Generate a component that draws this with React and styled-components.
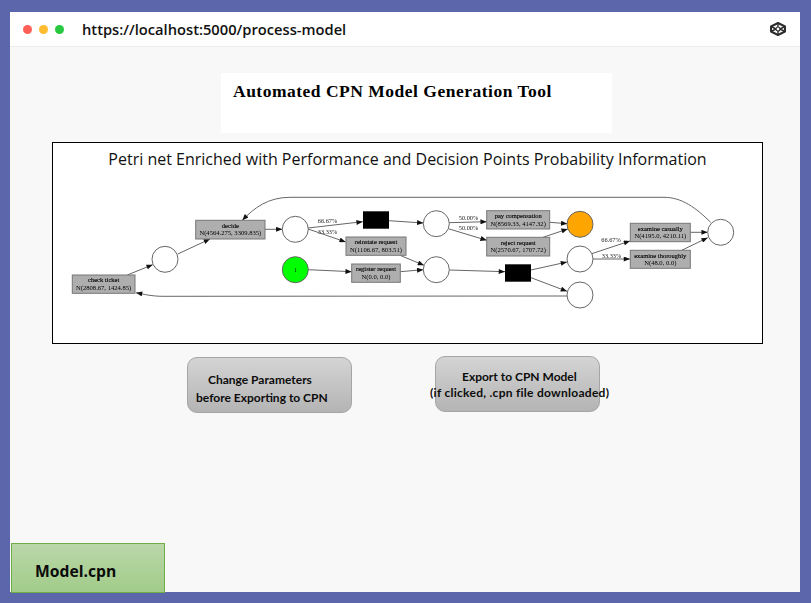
import styled, { createGlobalStyle } from 'styled-components';

const GlobalStyle = createGlobalStyle`
  html, body {
    margin: 0;
    padding: 0;
    background: #5b66ab;
  }
`;

const Page = styled.div`
  width: 811px;
  height: 603px;
  padding: 12px 11px 11px 10px;
  box-sizing: border-box;
  overflow: hidden;
`;

const Window = styled.div`
  height: 100%;
  display: flex;
  flex-direction: column;
  background: #f8f8f9;
  border-radius: 4px 4px 0 0;
`;

const TitleBar = styled.div`
  display: flex;
  align-items: center;
  height: 34px;
  padding: 0 14px 0 13px;
  background: #ffffff;
  border-bottom: 1px solid #ececee;
  flex-shrink: 0;
`;

const Dot = styled.span`
  width: 9px;
  height: 9px;
  border-radius: 50%;
  margin-right: 7px;
  background: ${(p) => p.$color};
`;

const Url = styled.div`
  margin-left: 11px;
  flex: 1;
  font-family: "Open Sans", sans-serif;
  font-weight: 600;
  font-size: 14.7px;
  color: #111;
`;

const Content = styled.div`
  flex: 1;
  display: flex;
  flex-direction: column;
  padding-top: 26px;
`;

const HeadingCard = styled.div`
  width: 391px;
  height: 60px;
  margin-left: 211px;
  padding: 8px 12px;
  box-sizing: border-box;
  background: #fff;
`;

const Heading = styled.h1`
  margin: 0;
  font-family: "Liberation Serif", serif;
  font-weight: bold;
  font-size: 17.5px;
  letter-spacing: 0.5px;
  line-height: 20px;
  color: #000;
`;

const DiagramBox = styled.div`
  width: 711px;
  height: 202px;
  margin: 9px 0 0 42px;
  box-sizing: border-box;
  border: 1px solid #000;
  background: #fff;
`;

const DiagramTitle = styled.div`
  height: 32px;
  padding-top: 6px;
  box-sizing: border-box;
  text-align: center;
  font-family: "Open Sans", sans-serif;
  font-size: 16px;
  line-height: 21px;
  color: #111;
`;

const NetDrawing = styled.svg`
  display: block;
  filter: blur(0.35px);
`;

const Actions = styled.div`
  display: flex;
  align-items: flex-start;
  gap: 83px;
  margin: 12px 0 0 177px;
`;

const ActionButton = styled.div`
  width: 165px;
  height: 56px;
  margin-top: ${(p) => p.$top}px;
  padding-top: ${(p) => p.$pad}px;
  box-sizing: border-box;
  display: flex;
  flex-direction: column;
  justify-content: center;
  background: linear-gradient(#d4d4d4, #b4b4b4);
  border: 1px solid #a5a5a5;
  border-radius: 10px;
  font-family: "Lato", sans-serif;
  font-weight: bold;
  font-size: 12px;
  line-height: ${(p) => p.$leading}px;
  color: #0c0c0c;
  white-space: nowrap;
`;

const ButtonLine = styled.span`
  margin-left: ${(p) => p.$indent}px;
  letter-spacing: ${(p) => p.$tracking || 0}px;
`;

const ModelFile = styled.div`
  margin: auto 0 -1px 1px;
  width: 154px;
  height: 50px;
  box-sizing: border-box;
  display: flex;
  align-items: center;
  padding: 5px 0 0 23px;
  background: linear-gradient(#bad7a9, #a2cc89);
  border: 1px solid #70ad47;
  font-family: "Open Sans", sans-serif;
  font-weight: 700;
  font-size: 15.7px;
  color: #0b0b0b;
`;

const places = [
  [165, 259.3, '#fff'],
  [295.3, 229.3, '#fff'],
  [295.3, 269.7, '#00ff00'],
  [436.3, 223.7, '#fff'],
  [436.3, 269.7, '#fff'],
  [580, 224.3, '#ffa500'],
  [580, 259, '#fff'],
  [580, 295, '#fff'],
  [720.7, 232.3, '#fff'],
];

const transitions = [
  [72.3, 275, 62.7, 18.3, 'check ticket', 'N(2808.67, 1424.85)'],
  [195.7, 220.3, 69.3, 18.7, 'decide', 'N(4564.275, 3309.835)'],
  [346, 237, 60, 18.3, 'reinstate request', 'N(1106.67, 803.51)'],
  [351.7, 264, 48.6, 18.3, 'register request', 'N(0.0, 0.0)'],
  [486.7, 210.7, 63, 18.3, 'pay compensation', 'N(8569.33, 4147.32)'],
  [486.7, 237.3, 63, 18.7, 'reject request', 'N(2570.67, 1707.72)'],
  [630.3, 223.3, 60, 18.4, 'examine casually', 'N(4195.0, 4210.11)'],
  [630.3, 250.3, 60, 18, 'examine thoroughly', 'N(48.0, 0.0)'],
];

const hidden = [
  [363, 211.3, 26, 17.4],
  [505, 264.3, 26, 17.4],
];

const arcs = [
  [127.3, 275, 152.7, 264.7],
  [177.7, 254, 210, 239],
  [265, 229.3, 282.3, 229.3],
  [308, 228, 362.7, 221.7],
  [307.3, 228.7, 345.7, 242],
  [389, 220.7, 423.3, 223],
  [449, 222.7, 486.7, 221.7],
  [448.3, 228.7, 486.7, 240.3],
  [308.3, 269.7, 351.7, 271.7],
  [400.3, 271.7, 423.3, 269.7],
  [400, 255.3, 424, 265.3],
  [449.3, 270, 505, 271.7],
  [531, 270, 567, 262],
  [531, 277.7, 567, 291.3],
  [549.7, 222.3, 567.3, 223.7],
  [543, 237.3, 567.7, 229],
  [591.7, 253.7, 630, 241],
  [593, 259, 630, 259],
  [690.3, 232.3, 707.7, 232.3],
  [681.7, 250.3, 707.7, 237.7],
];

const labels = [
  [327.5, 222.8, '66.67%'],
  [327.5, 233.8, '33.33%'],
  [468.5, 219.8, '50.00%'],
  [468.5, 229.8, '50.00%'],
  [611, 242.3, '66.67%'],
  [611.5, 257.5, '33.33%'],
];

const PetriNet = () => (
  <NetDrawing width="709" height="168" viewBox="53 175 709 168">
    <defs>
      <marker id="head" viewBox="0 0 10 8" refX="10" refY="4" markerWidth="7" markerHeight="5" markerUnits="userSpaceOnUse" orient="auto">
        <path d="M0 0 L10 4 L0 8 Z" fill="#111" />
      </marker>
    </defs>
    <g fill="none" stroke="#666" strokeWidth="1">
      {arcs.map(([x1, y1, x2, y2], i) => (
        <line key={i} x1={x1} y1={y1} x2={x2} y2={y2} markerEnd="url(#head)" />
      ))}
      <path d="M710.7 222.3 C696 208 682 197.3 664 197.3 L290 197.3 C268 197.3 254 208 242.3 220.3" markerEnd="url(#head)" />
      <path d="M567 296 L163 296.3 C152 296.3 145 294.5 136 292.7" markerEnd="url(#head)" />
    </g>
    {places.map(([cx, cy, fill], i) => (
      <circle key={i} cx={cx} cy={cy} r="13" fill={fill} stroke="#666" strokeWidth="1" />
    ))}
    <text x="295.3" y="271.5" textAnchor="middle" fontFamily="Liberation Serif" fontSize="5.5" fill="#111">1</text>
    {hidden.map(([x, y, w, h], i) => (
      <rect key={i} x={x} y={y} width={w} height={h} fill="#000" />
    ))}
    {transitions.map(([x, y, w, h, name, stats]) => (
      <g key={name}>
        <rect x={x} y={y} width={w} height={h} fill="#aeaeae" stroke="#777" strokeWidth="1" />
        <text x={x + w / 2} y={y + 7.2} textAnchor="middle" fontFamily="Liberation Serif" fontSize="6.5" fill="#000" stroke="#000" strokeWidth="0.12">{name}</text>
        <text x={x + w / 2} y={y + 14.8} textAnchor="middle" fontFamily="Liberation Serif" fontSize="6.6" fill="#000">{stats}</text>
      </g>
    ))}
    {labels.map(([x, y, text], i) => (
      <text key={i} x={x} y={y} textAnchor="middle" fontFamily="Liberation Serif" fontSize="6.3" fill="#222">{text}</text>
    ))}
  </NetDrawing>
);

const CubeIcon = () => (
  <svg width="16" height="14" viewBox="0 0 16 14" fill="none" stroke="#2d2d2d" strokeLinejoin="round">
    <path d="M8 1 L15 4.5 V9.5 L8 13 L1 9.5 V4.5 Z" strokeWidth="2" />
    <path d="M8 1 V5 M8 9 V13 M1 4.5 L6 7 M15 4.5 L10 7 M1 9.5 L6 7 M15 9.5 L10 7" strokeWidth="1.4" />
    <circle cx="8" cy="7" r="2" strokeWidth="1.2" fill="#fff" />
  </svg>
);

const App = () => (
  <Page>
    <GlobalStyle />
    <Window>
      <TitleBar>
        <Dot $color="#ff5f57" />
        <Dot $color="#febc2e" />
        <Dot $color="#28c840" />
        <Url>https://localhost:5000/process-model</Url>
        <CubeIcon />
      </TitleBar>
      <Content>
        <HeadingCard>
          <Heading>Automated CPN Model Generation Tool</Heading>
        </HeadingCard>
        <DiagramBox>
          <DiagramTitle>Petri net Enriched with Performance and Decision Points Probability Information</DiagramTitle>
          <PetriNet />
        </DiagramBox>
        <Actions>
          <ActionButton $top={1} $pad={8} $leading={18}>
            <ButtonLine $indent={20}>Change Parameters</ButtonLine>
            <ButtonLine $indent={8}>before Exporting to CPN</ButtonLine>
          </ActionButton>
          <ActionButton $top={0} $pad={2} $leading={16}>
            <ButtonLine $indent={26}>Export to CPN Model</ButtonLine>
            <ButtonLine $indent={-6} $tracking={0.27}>(if clicked, .cpn file downloaded)</ButtonLine>
          </ActionButton>
        </Actions>
        <ModelFile>Model.cpn</ModelFile>
      </Content>
    </Window>
  </Page>
);

export default App;
